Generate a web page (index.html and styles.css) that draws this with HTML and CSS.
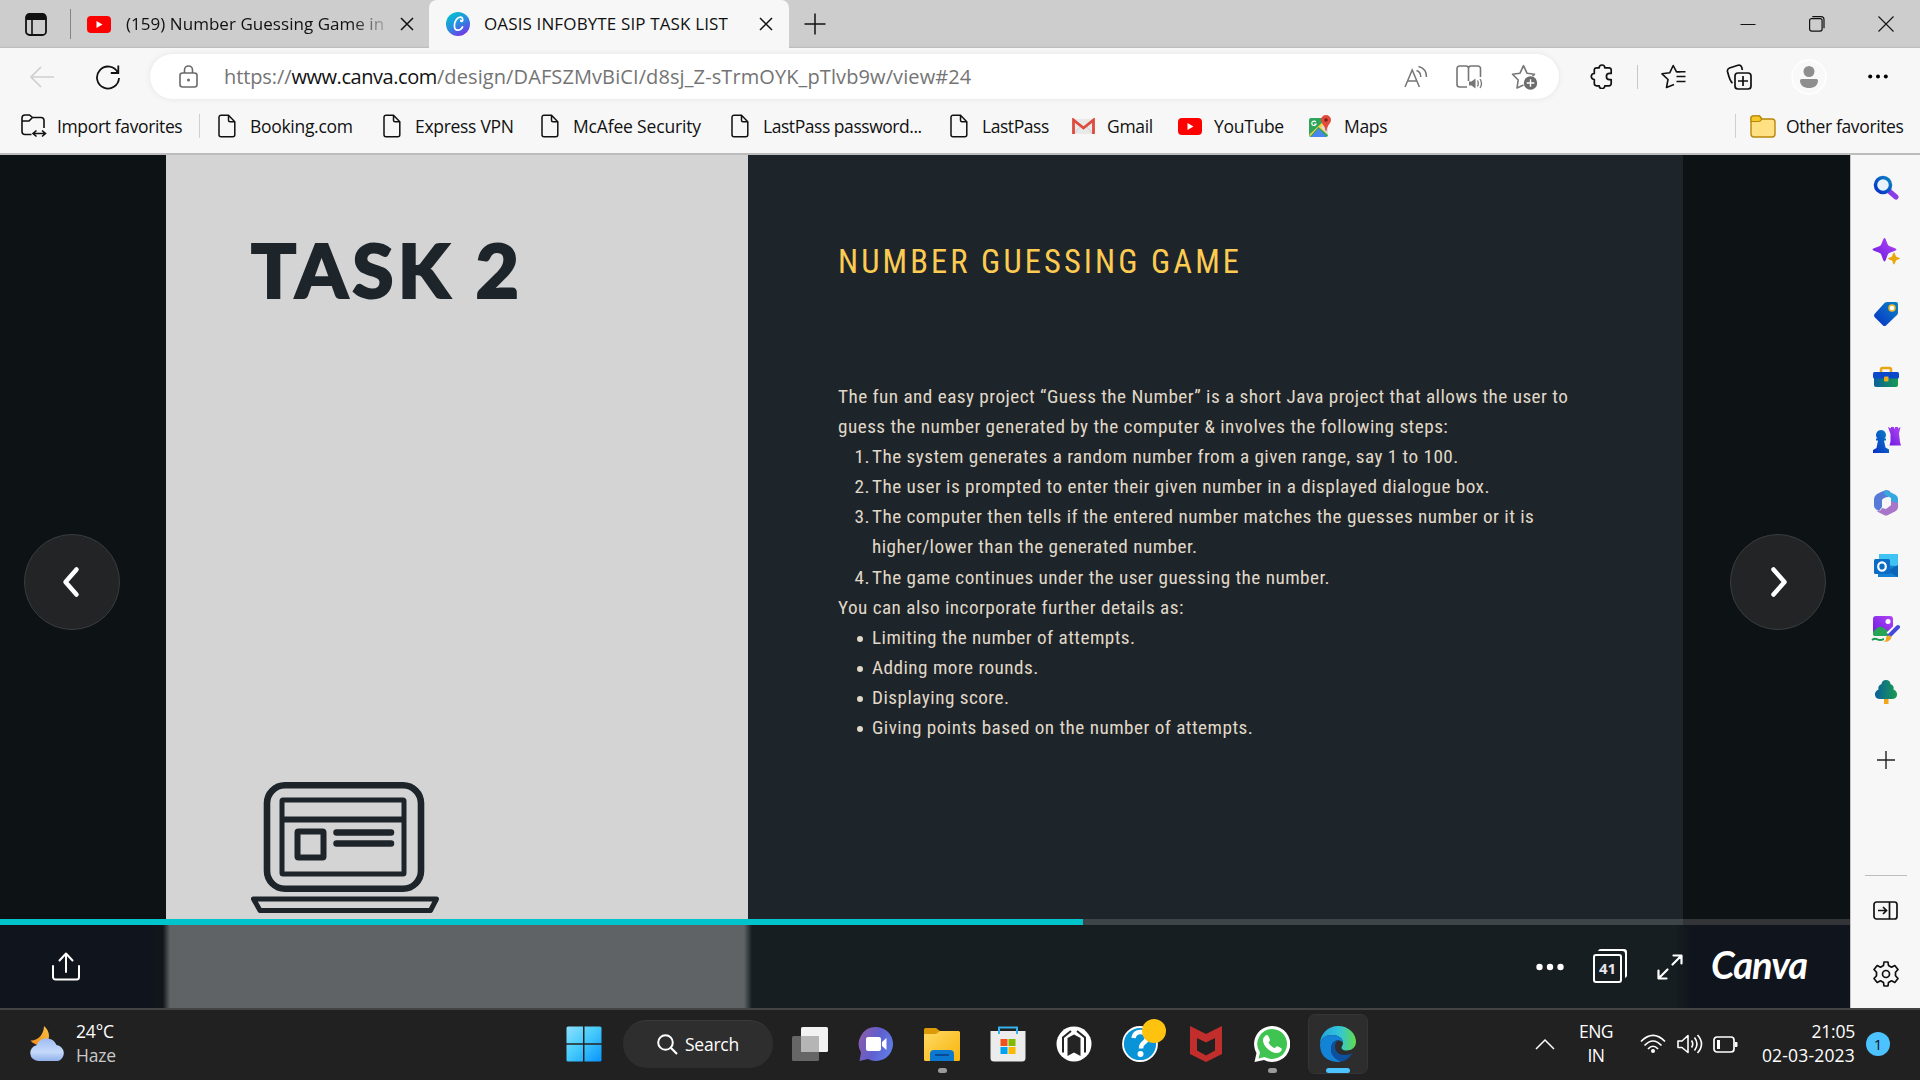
FILE: index.html
```
<!DOCTYPE html>
<html lang="en">
<head>
<meta charset="utf-8">
<title>OASIS INFOBYTE SIP TASK LIST</title>
<link rel="stylesheet" href="styles.css">
</head>
<body>
<svg class="defs" width="0" height="0" aria-hidden="true">
  <defs>
    <symbol id="page" viewBox="0 0 20 24"><path d="M4 1.2h7.500l6.300 6.500v13a2 2 0 0 1-2 2H4a2 2 0 0 1-2-2V3.200a2 2 0 0 1 2-2zM11.500 1.500v4.700a1.500 1.500 0 0 0 1.500 1.500h4.700" fill="none" stroke="#111" stroke-width="1.500"/></symbol>
    <symbol id="close" viewBox="0 0 14 14"><path d="M1 1l12 12M13 1L1 13" stroke="#111" stroke-width="1.500"/></symbol>
    <symbol id="youtube" viewBox="0 0 24 17"><rect width="24" height="17" rx="4" fill="#f00"/><path d="M9.500 5v7l6-3.500z" fill="#fff"/></symbol>
    <linearGradient id="gCanva" x1="0.200" y1="0" x2="0.800" y2="1"><stop offset="0" stop-color="#00c4cc"/><stop offset=".5" stop-color="#2a8be0"/><stop offset="1" stop-color="#7d2ae8"/></linearGradient>
    <linearGradient id="gBlue" x1="0" y1="1" x2="1" y2="0"><stop offset="0" stop-color="#0a2fc8"/><stop offset="1" stop-color="#0b84c4"/></linearGradient>
    <linearGradient id="gGreen" x1="0" y1="0" x2="1" y2="0"><stop offset="0" stop-color="#0a5f9c"/><stop offset="1" stop-color="#1a9a50"/></linearGradient>
    <linearGradient id="gPurple" x1="0" y1="1" x2="1" y2="0"><stop offset="0" stop-color="#6a1be0"/><stop offset="1" stop-color="#b245f5"/></linearGradient>
    <linearGradient id="gWin" x1="0" y1="0" x2="1" y2="1"><stop offset="0" stop-color="#8fe0ff"/><stop offset=".45" stop-color="#48ccfb"/><stop offset="1" stop-color="#0894fd"/></linearGradient>
    <linearGradient id="gFolder" x1="0" y1="0" x2="1" y2="1"><stop offset="0" stop-color="#ffd965"/><stop offset="1" stop-color="#f7b50a"/></linearGradient>
    <linearGradient id="gChat" x1="0" y1="0.300" x2="1" y2="0.700"><stop offset="0" stop-color="#8a5bab"/><stop offset=".5" stop-color="#5f5fcf"/><stop offset="1" stop-color="#5f7fe8"/></linearGradient>
    <linearGradient id="gCloud" x1="0" y1="0" x2="0" y2="1"><stop offset="0" stop-color="#9fbcf5"/><stop offset=".6" stop-color="#c5dafa"/><stop offset="1" stop-color="#8fb0ea"/></linearGradient>
    <linearGradient id="gMoon" x1="0" y1="1" x2="1" y2="0"><stop offset="0" stop-color="#f08a1c"/><stop offset="1" stop-color="#f7c443"/></linearGradient>
    <linearGradient id="gEdgeTop" x1="0" y1="0.500" x2="1" y2="0.500"><stop offset="0" stop-color="#1fa5e0"/><stop offset=".55" stop-color="#33c5d8"/><stop offset="1" stop-color="#62dc4a"/></linearGradient>
  </defs>
</svg>

<header class="browser">
  <div class="tabs">
    <svg class="tab-actions" width="22" height="23" viewBox="0 0 22 23"><rect x="1" y="1" width="20" height="21" rx="3.500" fill="none" stroke="#111" stroke-width="1.800"/><path d="M1 7V4a3 3 0 0 1 3-3h14a3 3 0 0 1 3 3v3z" fill="#111"/><path d="M7 6v16" stroke="#111" stroke-width="1.600"/></svg>
    <span class="tab-divider"></span>
    <div class="tab">
      <svg width="24" height="17"><use href="#youtube"/></svg>
      <span class="tab-title tab-title-fade">(159) Number Guessing Game in</span>
      <svg width="14" height="14"><use href="#close"/></svg>
    </div>
    <div class="tab tab-active">
      <svg width="24" height="24" viewBox="0 0 24 24"><circle cx="12" cy="12" r="12" fill="url(#gCanva)"/><path d="M16.600 8.600c.5-2-.4-3.400-2.200-3.400-3.200 0-6 4.300-6 8.300 0 2.800 1.200 4.700 3.500 4.700 2.100 0 3.800-1.500 4.700-3.300M16.400 9.200c-.6.5-1.800.4-1.600-.8" fill="none" stroke="#fff" stroke-width="1.700" stroke-linecap="round"/></svg>
      <span class="tab-title">OASIS INFOBYTE SIP TASK LIST</span>
      <svg width="14" height="14"><use href="#close"/></svg>
    </div>
    <svg class="new-tab" width="22" height="22" viewBox="0 0 22 22"><path d="M11 0.500v21M.5 11h21" stroke="#111" stroke-width="1.500"/></svg>
    <div class="window-buttons">
      <svg width="16" height="16" viewBox="0 0 16 16"><path d="M.5 8.500h15" stroke="#111"/></svg>
      <svg width="16" height="16" viewBox="0 0 16 16"><rect x=".6" y="2.600" width="12.500" height="12.500" rx="2" fill="none" stroke="#111" stroke-width="1.200"/><path d="M3.300 .6h8.700a3 3 0 0 1 3 3v8.700" fill="none" stroke="#111" stroke-width="1.200"/></svg>
      <svg width="16" height="16" viewBox="0 0 16 16"><path d="M.5 .5l15 15M15.500 .5l-15 15" stroke="#111" stroke-width="1.100"/></svg>
    </div>
  </div>

  <div class="toolbar">
    <svg class="back" width="24" height="22" viewBox="0 0 24 22"><path d="M24 11H1M11 1L1 11l10 10" fill="none" stroke="#cfcfcf" stroke-width="1.600"/></svg>
    <svg class="reload" width="26" height="26" viewBox="0 0 26 26"><path d="M22.800 8.500A11 11 0 1 0 24 14M23.300 1.500v7.500h-7.500" fill="none" stroke="#111" stroke-width="1.800"/></svg>
    <div class="address">
      <svg class="lock" width="19" height="23" viewBox="0 0 19 23"><rect x="1" y="8" width="17" height="14" rx="2.500" fill="none" stroke="#6a6a6a" stroke-width="1.600"/><path d="M5.500 8V5a4 4 0 0 1 8 0v3" fill="none" stroke="#6a6a6a" stroke-width="1.600"/><circle cx="9.500" cy="15" r="1.500" fill="#6a6a6a"/></svg>
      <div class="url"><span class="scheme">https://</span><b>www.canva.com</b><span class="path">/design/DAFSZMvBiCI/d8sj_Z-sTrmOYK_pTlvb9w/view#24</span></div>
      <div class="address-tools">
        <svg width="24" height="24" viewBox="0 0 24 24" fill="none" stroke="#767676" stroke-width="1.500"><path d="M1 22L8.200 5l7.200 17M3.500 16h9.400M12.500 5.500c3 1 4.300 3.200 4.300 6.500M14.500 1.500c5 1.300 8 5.300 8 10.500"/></svg>
        <svg width="27" height="24" viewBox="0 0 27 24" fill="none" stroke="#767676" stroke-width="1.600"><path d="M11 22H3.500A2.500 2.500 0 0 1 1 19.500V3.500A2.500 2.500 0 0 1 3.500 1H10q2.500 0 2.500 2.500Q12.500 1 15 1h7a2.500 2.500 0 0 1 2.500 2.500V12M12.500 3v13"/><path d="M13 16.500h2.500l4-3v10l-4-3H13z" fill="#767676" stroke="none"/><path d="M21.500 15.500q1.500 3 0 6M24 14q3 4.500 0 9" stroke-width="1.300"/></svg>
        <svg width="27" height="26" viewBox="0 0 27 26"><path d="M12.500 21l-6.500 3 1.200-8L1.500 10.200l7.500-1 3.500-7.500 3.500 7.500 7.500 1-2 2" fill="none" stroke="#767676" stroke-width="1.600" stroke-linejoin="round"/><circle cx="19.500" cy="19" r="6.700" fill="#6b6b6b"/><path d="M19.500 15.200v7.600M15.700 19h7.600" stroke="#fff" stroke-width="1.400"/></svg>
      </div>
    </div>
    <svg class="extensions" width="23" height="25" viewBox="0 0 23 25"><path d="M6.500 3.800h2.700a2.800 2.800 0 0 1 5.600 0H19a2.200 2.200 0 0 1 2.200 2.200v3.400h-1.700a3.100 3.100 0 0 0 0 6.200h1.700v4a2.200 2.200 0 0 1-2.200 2.200h-4.200a2.800 2.800 0 0 1-5.600 0H6.500a2.200 2.200 0 0 1-2.200-2.200v-4.100a3 3 0 0 1 0-6V6a2.200 2.200 0 0 1 2.200-2.200z" fill="none" stroke="#111" stroke-width="1.700" stroke-linejoin="round"/></svg>
    <span class="tool-divider"></span>
    <svg class="favorites" width="25" height="25" viewBox="0 0 25 25" fill="none" stroke="#111" stroke-width="1.600" stroke-linejoin="round"><path d="M13 20.500l-7.500 3L7 15.500 1 9.800l7.700-1L12.200 1.500l3.300 6.300h4"/><path d="M15.500 12.500h9M15.500 17.500h9M15.500 7.800h9"/></svg>
    <svg class="collections" width="26" height="26" viewBox="0 0 26 26" fill="none" stroke="#111" stroke-width="1.700"><rect x="9" y="9" width="16" height="16" rx="3"/><path d="M17 12v10M12 17h10"/><path d="M6.500 19C4 17.500 3.200 14 1.500 7.500Q1 5 3.500 4L12 1.300q3-.8 3.700 2l.7 2.700"/></svg>
    <svg class="profile" width="36" height="36" viewBox="0 0 36 36"><circle cx="18" cy="18" r="17" fill="#f9f9f9" stroke="#fff" stroke-width="1.500"/><circle cx="18" cy="12.500" r="5.500" fill="#8e8e8e"/><path d="M10.500 20h15a1.500 1.500 0 0 1 1.500 1.500c0 5-4 7.500-9 7.500s-9-2.500-9-7.500a1.500 1.500 0 0 1 1.500-1.500z" fill="#8e8e8e"/></svg>
    <svg class="more" width="20" height="5" viewBox="0 0 20 5"><circle cx="2.200" cy="2.500" r="2"/><circle cx="10" cy="2.500" r="2"/><circle cx="17.800" cy="2.500" r="2"/></svg>
  </div>

  <nav class="bookmarks">
    <a class="bookmark import"><svg width="26" height="24" viewBox="0 0 26 24" fill="none" stroke="#111" stroke-width="1.600"><path d="M10.500 20.500H4a3 3 0 0 1-3-3V4a3 3 0 0 1 3-3h4.500l3 2.500H20a3 3 0 0 1 3 3V14M1 7h7l3.500-3.500"/><path d="M15.500 16.500l-3.500 3 3.500 3M21 16.500l3.500 3-3.500 3M12.500 19.500H24"/></svg><span>Import favorites</span></a>
    <a class="bookmark"><svg width="20" height="24"><use href="#page"/></svg><span>Booking.com</span></a>
    <a class="bookmark"><svg width="20" height="24"><use href="#page"/></svg><span>Express VPN</span></a>
    <a class="bookmark mcafee"><svg width="20" height="24"><use href="#page"/></svg><span>McAfee Security</span></a>
    <a class="bookmark lastpass"><svg width="20" height="24"><use href="#page"/></svg><span>LastPass password...</span></a>
    <a class="bookmark lastpass"><svg width="20" height="24"><use href="#page"/></svg><span>LastPass</span></a>
    <a class="bookmark gmail"><svg width="23" height="17" viewBox="0 0 23 17"><path d="M2 1h19v15H2z" fill="#e9e9e9"/><path d="M2 16l7-8M21 16l-7-8" stroke="#cfcfcf" fill="none"/><path d="M1.500 16V2l10 8 10-8v14" fill="none" stroke="#dd4b3e" stroke-width="2.800"/></svg><span>Gmail</span></a>
    <a class="bookmark tube"><svg width="24" height="17"><use href="#youtube"/></svg><span>YouTube</span></a>
    <a class="bookmark maps"><svg width="23" height="23" viewBox="0 0 23 23"><rect x="0" y="3" width="19" height="19" rx="2" fill="#2fa45a"/><path d="M0 20L17 4l2 2v14L9.500 12 1.500 21z" fill="#f7d04a"/><path d="M2 22l7.700-8.500L17.500 22z" fill="#4a86f0"/><path d="M12 12l7 8V8z" fill="#dedede"/><path d="M17 0a5 5 0 0 1 5 5c0 3.500-4 5-4.500 11h-1C16 10 12 8.500 12 5a5 5 0 0 1 5-5z" fill="#e24a3b"/><circle cx="17" cy="5" r="1.800" fill="#7c1d16"/><path d="M6.800 7a2.200 2.200 0 1 0 .3 2H5.200" fill="none" stroke="#fff" stroke-width="1.200"/></svg><span>Maps</span></a>
    <a class="bookmark other"><svg width="26" height="23" viewBox="0 0 26 23"><path d="M3 1h6.500l2.500 3h10a3 3 0 0 1 3 3v12a3 3 0 0 1-3 3H4a3 3 0 0 1-3-3V3a2 2 0 0 1 2-2z" fill="#ffe083" stroke="#b8860b" stroke-width="1.400"/><path d="M1 6.500h7.500q2 0 3.200-2.200L9.500 1H3a2 2 0 0 0-2 2z" fill="#f7c928" stroke="#b8860b" stroke-width="1.200"/></svg><span>Other favorites</span></a>
  </nav>
</header>

<div class="content">
  <main class="viewer">
    <div class="stage">
      <div class="stage-side stage-left">
        <button class="nav-button" aria-label="Previous"><svg width="20" height="34" viewBox="0 0 20 34"><path d="M14.500 4.500L3.500 17l11 12.500" fill="none" stroke="#fff" stroke-width="4.500" stroke-linecap="round" stroke-linejoin="round"/></svg></button>
      </div>
      <section class="slide-left">
        <h1>TASK 2</h1>
        <svg class="laptop" width="190" height="132" viewBox="0 0 190 132" fill="none" stroke="#1d252a">
          <rect x="16" y="3.300" width="154" height="103.500" rx="18" stroke-width="6.600"/>
          <rect x="31" y="18" width="122" height="74" rx="1" stroke-width="5"/>
          <path d="M31 37.500h122" stroke-width="6"/>
          <rect x="46.500" y="49.500" width="26" height="26" rx="1" stroke-width="6"/>
          <path d="M85.500 50.500H140M85.500 61.500H140" stroke-width="6.500" stroke-linecap="round"/>
          <path d="M2.500 117h183l-6 11.500H9z" stroke-width="5" stroke-linejoin="round"/>
        </svg>
      </section>
      <section class="slide-right">
        <h2>NUMBER GUESSING GAME</h2>
        <div class="copy">
          <p>The fun and easy project “Guess the Number” is a short Java project that allows the user to<br>guess the number generated by the computer &amp; involves the following steps:</p>
          <ol>
            <li><i>1.</i><span>The system generates a random number from a given range, say 1 to 100.</span></li>
            <li><i>2.</i><span>The user is prompted to enter their given number in a displayed dialogue box.</span></li>
            <li><i>3.</i><span>The computer then tells if the entered number matches the guesses number or it is<br>higher/lower than the generated number.</span></li>
            <li><i>4.</i><span>The game continues under the user guessing the number.</span></li>
          </ol>
          <p>You can also incorporate further details as:</p>
          <ul>
            <li><em></em><span>Limiting the number of attempts.</span></li>
            <li><em></em><span>Adding more rounds.</span></li>
            <li><em></em><span>Displaying score.</span></li>
            <li><em></em><span>Giving points based on the number of attempts.</span></li>
          </ul>
        </div>
      </section>
      <div class="stage-side stage-right">
        <button class="nav-button" aria-label="Next"><svg width="20" height="34" viewBox="0 0 20 34"><path d="M5.500 4.500l11 12.500-11 12.500" fill="none" stroke="#fff" stroke-width="4.500" stroke-linecap="round" stroke-linejoin="round"/></svg></button>
      </div>
    </div>
    <div class="progress"><div class="progress-fill" style="width:58.540%"></div></div>
    <footer class="controls">
      <svg class="share" width="28" height="29" viewBox="0 0 28 29" fill="none" stroke="#fff" stroke-width="2" stroke-linecap="round" stroke-linejoin="round"><path d="M14 20V2M7.500 8.500L14 1.500l6.500 7M1 14v11a2.500 2.500 0 0 0 2.500 2.500h21A2.500 2.500 0 0 0 27 25V14"/></svg>
      <svg class="dots" width="28" height="8" viewBox="0 0 28 8" fill="#fff"><circle cx="3.500" cy="4" r="3.200"/><circle cx="14" cy="4" r="3.200"/><circle cx="24.500" cy="4" r="3.200"/></svg>
      <div class="pages"><span>41</span></div>
      <svg class="expand" width="26" height="26" viewBox="0 0 26 26" fill="none" stroke="#fff" stroke-width="2.200" stroke-linecap="round" stroke-linejoin="round"><path d="M15.500 10.500L24 2M16.500 1.500h8v8M10.500 15.500L2 24M1.500 16.500v8h8"/></svg>
      <span class="wordmark">Canva</span>
    </footer>
  </main>

  <aside class="sidebar">
    <div><svg width="26" height="26" viewBox="0 0 26 26"><path d="M16 16l7 6" stroke="#8a3be8" stroke-width="5" stroke-linecap="round"/><circle cx="10" cy="10" r="7.500" fill="#e6f3fb" stroke="url(#gBlue)" stroke-width="3.500"/></svg></div>
    <div><svg width="28" height="28" viewBox="0 0 28 28"><path d="M12.500 1c1.500 0 2.500 6 4 7.500s8 2.500 8 4-6.500 2.500-8 4-2.500 8-4 8-2.500-6.500-4-8-8-2.500-8-4 6.500-2.500 8-4 2.500-7.500 4-7.500z" fill="url(#gPurple)"/><path d="M22 15.500c.9 0 1.400 3.300 2.100 3.900s3.900 1.200 3.900 2.100-3.300 1.400-3.900 2.100-1.200 3.900-2.100 3.900-1.400-3.300-2.100-3.900-3.900-1.200-3.900-2.100 3.300-1.400 3.900-2.100 1.200-3.900 2.100-3.900z" fill="#e9a80c"/></svg></div>
    <div><svg width="26" height="26" viewBox="0 0 26 26"><path d="M12 1.500Q13 1 14.500 1H23a2 2 0 0 1 2 2v8.500q0 1.500-1 2.500L13 24.500q-1.500 1-3 0L1.500 16q-1-1.500 0-3z" fill="url(#gBlue)"/><circle cx="19" cy="7" r="3" fill="#fff" stroke="#f0b823" stroke-width="1.500"/></svg></div>
    <div><svg width="28" height="22" viewBox="0 0 28 22"><path d="M9 7V3.500A1.500 1.500 0 0 1 10.500 2h7A1.500 1.500 0 0 1 19 3.500V7" fill="none" stroke="#eaa612" stroke-width="2.500"/><path d="M2 10h24v9a2 2 0 0 1-2 2H4a2 2 0 0 1-2-2z" fill="url(#gGreen)"/><rect x="1" y="6" width="26" height="6.500" rx="1.500" fill="#0c48cc"/><rect x="12" y="10.500" width="4.500" height="5" rx="1" fill="#f0ae17"/></svg></div>
    <div><svg width="30" height="28" viewBox="0 0 30 28"><path d="M17 1l3 1.500V1h3v1.500h1V1h3v1.500L29.500 1l-1.500 6.500 1 8.500 1 3.500H18.500l1-4V8z" fill="url(#gPurple)"/><path d="M10 4a5 5 0 0 1 3.500 8.500H15v2h-2l1.500 7 3.500 2v3.500H2V24l3.500-2L7 14.500H5v-2h1.500A5 5 0 0 1 10 4z" fill="url(#gBlue)"/></svg></div>
    <div><svg width="26" height="28" viewBox="0 0 26 28"><path d="M8 3l5-2 4 1-2 6-6 3v7l-3 4q-5-2-5-5v-6q0-4 3-6z" fill="#557bd6"/><path d="M13 1l9 4.500q3 1.500 3 5V16l-7-3v-4l-6-3q-2-3 1-5z" fill="#38a7e0"/><path d="M25 14v4q0 3-3 4.500L15 26q-2 1-4 0L3 22q4 1 6-3l4 1 5-4v-4z" fill="#a776c8"/><path d="M9.500 10l4-2 4.500 2.500v5.500l-4.500 3-4-2.500z" fill="#f7f7f7"/></svg></div>
    <div><svg width="26" height="26" viewBox="0 0 26 26"><rect x="6" y="1" width="19" height="12" fill="#3fc3f2"/><path d="M5 12l20 1v11H5z" fill="#1680d2"/><path d="M14 18l11-6v12z" fill="#0b66b8"/><rect x="1" y="6" width="16" height="15" rx="1.500" fill="#0a6cc4"/><ellipse cx="9" cy="13.500" rx="3.800" ry="4.200" fill="none" stroke="#fff" stroke-width="2.200"/></svg></div>
    <div><svg width="29" height="28" viewBox="0 0 29 28"><rect x="2" y="1" width="20" height="20" rx="3" fill="url(#gPurple)"/><path d="M2 17q5-6 8.500-5t8 6l-2 3H5q-3 0-3-2z" fill="#28a457"/><circle cx="17" cy="6.500" r="2.500" fill="#fff"/><path d="M1 25c4-3 5 0 8 0s3-1 4-1" fill="none" stroke="#1c9a50" stroke-width="2"/><path d="M18 20L27 11.500" stroke="#fff" stroke-width="7"/><path d="M18.500 20.500L27 12" stroke="#4548df" stroke-width="4" stroke-linecap="round"/><path d="M12 27q3-1 3-4t4-2.500q2.500 1.500.5 4T12 27z" fill="#f2a823"/></svg></div>
    <div><svg width="24" height="26" viewBox="0 0 24 26"><path d="M10 18h4.500v7H10z" fill="#f0a51d"/><path d="M12 1q4 0 4.500 4 4 1.500 3 5.500 4 2 3.500 5.500-.5 4-5 4H6q-4.500 0-5-4-.5-3.500 3.500-5.500-1-4 3-5.500Q8 1 12 1z" fill="url(#gGreen)"/></svg></div>
    <div class="side-add"><svg width="18" height="18" viewBox="0 0 18 18"><path d="M9 0v18M0 9h18" stroke="#222" stroke-width="1.400"/></svg></div>
    <hr>
    <div class="side-panel"><svg width="25" height="19" viewBox="0 0 25 19" fill="none" stroke="#111" stroke-width="1.700"><rect x="1" y="1" width="23" height="17" rx="2.500"/><path d="M16.500 1v17M5 9.500h8M10 6l3.500 3.500L10 13"/></svg></div>
    <div class="side-settings"><svg width="26" height="26" viewBox="0 0 26 26" fill="none" stroke="#111" stroke-width="1.700" stroke-linejoin="round"><path d="M10.500 4.500L11 1h4l.5 3.500 3 1.700L21.800 4.500l3.200 4-2.500 2.800v3.400l2.500 2.800-3.200 4-3.300-1.700-3 1.700L15 25h-4l-.5-3.500-3-1.700-3.300 1.700-3.200-4 2.500-2.800v-3.400L1 8.500l3.200-4 3.300 1.700z"/><circle cx="13" cy="13" r="3.500"/></svg></div>
  </aside>
</div>

<div class="taskbar">
  <div class="weather">
    <svg width="37" height="37" viewBox="0 0 37 37"><path d="M15 1c6 5 7 14 1 17.500-5 3-11 1.500-14.500-3C9 16 15 9 15 1z" fill="url(#gMoon)"/><path d="M9 36a8 8 0 0 1-1.500-15.800C9.500 16 13 13.500 17.500 13.500c5 0 8.500 2.700 10 6.500A8.200 8.200 0 0 1 29 36z" fill="url(#gCloud)"/></svg>
    <div><div class="temp">24°C</div><div class="haze">Haze</div></div>
  </div>
  <div class="apps">
    <div class="app"><svg width="36" height="36" viewBox="0 0 36 36" fill="url(#gWin)"><path d="M2 .5h15v16.800H.5V2A1.500 1.500 0 0 1 2 .5zM18.500.5H34A1.500 1.500 0 0 1 35.500 2v15.300h-17zM.5 18.800H17v16.700H2A1.500 1.500 0 0 1 .5 34zM18.500 18.800h17V34a1.500 1.500 0 0 1-1.500 1.500H18.500z"/></svg></div>
    <div class="search"><svg width="21" height="21" viewBox="0 0 21 21"><circle cx="8.500" cy="8.500" r="7.300" fill="none" stroke="#fff" stroke-width="2"/><path d="M13.800 13.800L20 20" stroke="#fff" stroke-width="2.200"/></svg><span>Search</span></div>
    <div class="app"><svg width="36" height="36" viewBox="0 0 36 36"><rect x="9" y="1" width="27" height="25" rx="1.500" fill="#f2f2f2"/><rect x="0" y="10" width="27" height="25" rx="1.500" fill="#666"/><path d="M9 10h18v16H9z" fill="#b5b5b5"/></svg></div>
    <div class="app"><svg width="36" height="36" viewBox="0 0 36 36"><path d="M18 1a17 17 0 1 1-8 32L1.500 35 3 26.500A17 17 0 0 1 18 1z" fill="url(#gChat)"/><rect x="8" y="11" width="15" height="14" rx="2" fill="#fff"/><path d="M24 16l4.500-4v12L24 20z" fill="#fff"/></svg></div>
    <div class="app app-open"><svg width="36" height="36" viewBox="0 0 36 36"><path d="M0 3.500A1.500 1.500 0 0 1 1.500 2H12l4 3v6H0z" fill="#dc9a06"/><path d="M0 8h12l4-3h18.500A1.500 1.500 0 0 1 36 6.500v27a1.500 1.500 0 0 1-1.500 1.500h-33A1.500 1.500 0 0 1 0 33.500z" fill="url(#gFolder)"/><path d="M6 35v-7a4 4 0 0 1 4-4h16a4 4 0 0 1 4 4v7z" fill="#0c78cf"/><path d="M11 29h14" stroke="#064a94" stroke-width="2"/></svg></div>
    <div class="app"><svg width="36" height="36" viewBox="0 0 36 36"><path d="M.5 5h35v27a3.500 3.500 0 0 1-3.500 3.500H4A3.500 3.500 0 0 1 .5 32z" fill="#ececec"/><path d="M9 8V1.500h18V8" fill="none" stroke="#35b2ea" stroke-width="2"/><path d="M10.500 13h7v7h-7z" fill="#f1511b"/><path d="M18.500 13h7v7h-7z" fill="#80bb01"/><path d="M10.500 21h7v7h-7z" fill="#00a3ee"/><path d="M18.500 21h7v7h-7z" fill="#fbb902"/></svg></div>
    <div class="app"><svg width="36" height="36" viewBox="0 0 36 36"><circle cx="18" cy="18" r="17.500" fill="#fff"/><path d="M11.500 30V12l6.500-3.500L24.500 12v18L18 26.500z" fill="#242424"/><path d="M7 26.500V11.500l8-6.500M29 26.500V11.500L21 5" fill="none" stroke="#242424" stroke-width="2"/></svg></div>
    <div class="app help"><svg width="36" height="36" viewBox="0 0 36 36"><circle cx="18" cy="18" r="17" fill="#0a94d8" stroke="#fff" stroke-width="1.800"/><path d="M11.500 12q1-6 7-6 6.500 0 6.500 5.500 0 3-3.500 5.500-2.500 2-2.500 5.500" fill="none" stroke="#fff" stroke-width="4.500"/><circle cx="18.500" cy="28" r="3" fill="#fff"/></svg><span class="badge"></span></div>
    <div class="app"><svg width="32" height="36" viewBox="0 0 32 36"><path d="M0 0l16 8L32 0v28l-16 8-16-8zM7 12v12.500l9 5 9-5V12l-9 4.500z" fill="#c22e2c" fill-rule="evenodd"/></svg></div>
    <div class="app app-open"><svg width="36" height="36" viewBox="0 0 36 36"><path d="M18 0a18 18 0 1 1-8 34L.5 36 2.500 27A18 18 0 0 1 18 0z" fill="#fff"/><path d="M18 3a15 15 0 1 1-7.500 28l-6 1.500L6 26.500A15 15 0 0 1 18 3z" fill="#3fc351"/><path d="M11.500 9.500q2-1.200 3 .8l1.500 3.500q.2 1-1.500 2.700 2 4 6.200 5.700 1.800-2.400 2.800-2l3.800 2q1 1-.3 3-3 3-7.500 1.300Q11 23 9 15.500q-.3-4 2.500-6z" fill="#fff"/></svg></div>
    <div class="app app-active"><svg width="36" height="36" viewBox="0 0 36 36"><path d="M0 18C0 8 8 0 18 0c11 0 18 8 18 15.500 0 6-4.500 9-9.500 9-4 0-5-2-5-3s1.500-2 1.500-4.500C23 12 18 9 12 9 6 9 1 12 0 18z" fill="url(#gEdgeTop)"/><path d="M0 18C1 12 6 9 12 9c6 0 11 3 11 8-1-2-3-2.800-5-2.800-4 0-7 4-7 8.800 0 7 6 11 10 12.700Q19.500 36 18 36 0 35 0 18z" fill="#1283d6"/><path d="M11 23c0-4.800 3-8.800 7-8.800-2 1.500-3 4-3 6.300 0 5 4 8.500 9.500 8.500 3.500 0 6-1 8-2.300Q29 34 21 35.700C16 33.500 11 30 11 23z" fill="#0d50a0"/></svg></div>
  </div>
  <div class="tray">
    <svg class="chevron" width="20" height="12" viewBox="0 0 20 12"><path d="M1 11l9-9 9 9" fill="none" stroke="#fff" stroke-width="1.500"/></svg>
    <div class="lang">ENG<br>IN</div>
    <svg class="wifi" width="26" height="20" viewBox="0 0 26 20" fill="none" stroke="#fff" stroke-width="1.700"><path d="M1 7.500q12-12 24 0M4.500 11.500q8.500-9 17 0M8 15q5-5.500 10 0"/><circle cx="13" cy="17" r="2" fill="#fff" stroke="none"/></svg>
    <svg class="volume" width="26" height="20" viewBox="0 0 26 20" fill="none" stroke="#fff" stroke-width="1.600" stroke-linejoin="round"><path d="M1 7v6.500h4l6 5V1.500L5 7zM14.500 6.500q2.500 3.500 0 7M17.500 3.500q5 6.500 0 13M20.500 1q8 9 0 18"/></svg>
    <svg class="battery" width="25" height="17" viewBox="0 0 25 17"><rect x="1" y="1" width="20" height="15" rx="3" fill="none" stroke="#fff" stroke-width="1.700"/><path d="M4 4h3v9H4zM22 6h1.500q1 0 1 1v3q0 1-1 1H22z" fill="#fff"/></svg>
    <div class="clock">21:05<br><span>02-03-2023</span></div>
    <span class="notify">1</span>
  </div>
</div>
</body>
</html>
```
FILE: styles.css
```
* { box-sizing: border-box; }
body {
  margin: 0;
  width: 1920px;
  height: 1080px;
  overflow: hidden;
  font-family: "Open Sans", "Noto Sans", sans-serif;
  color: #111;
  background: #f7f7f7;
}
svg { display: block; flex: none; }
.defs { position: absolute; }

.browser { height: 155px; border-bottom: 2px solid #bcbcbc; }

/* Tab strip */
.tabs {
  display: flex;
  align-items: center;
  height: 48px;
  padding-left: 25px;
  background: linear-gradient(#cdcdcd 46px, #b9b9b9 48px);
}
.tab-divider { width: 1px; height: 30px; margin: 0 16px 0 23px; background: #858585; }
.tab { display: flex; align-items: center; height: 48px; width: 342px; font-size: 17px; }
.tab-title { width: 274px; padding: 0 0 2px 15px; white-space: nowrap; letter-spacing: 0.040px; }
.tab-title-fade {
  width: 289px;
  -webkit-mask-image: linear-gradient(90deg, #000 240px, transparent 282px);
  mask-image: linear-gradient(90deg, #000 240px, transparent 282px);
}
.tab-active { width: 360px; padding-left: 17px; background: #f7f7f7; border-radius: 8px 8px 0 0; }
.tab-active .tab-title { width: 289px; padding-left: 14px; letter-spacing: 0.130px; }
.new-tab { margin-left: 15px; }
.window-buttons { display: flex; gap: 53px; margin-left: auto; padding-right: 26px; }

/* Address row */
.toolbar { display: flex; align-items: center; height: 57px; padding-left: 30px; }
.reload { margin-left: 41px; }
.address {
  display: flex;
  align-items: center;
  width: 1409px;
  height: 45px;
  margin-left: 29px;
  padding: 0 21px 0 29px;
  border-radius: 23px;
  background: #fff;
  box-shadow: 0 0 6px rgba(0, 0, 0, 0.080);
}
.url { display: flex; margin-left: 26px; font-size: 20px; color: #747474; white-space: nowrap; }
.url b { font-weight: 400; color: #111; letter-spacing: -0.440px; }
.scheme { letter-spacing: -0.100px; }
.path { letter-spacing: 0.100px; }
.address-tools { display: flex; align-items: center; gap: 28px; margin-left: auto; }
.extensions { margin-left: 31px; }
.tool-divider { width: 1px; height: 24px; margin: 0 23px 0 24px; background: #c8c8c8; }
.collections { margin-left: 40px; }
.profile { margin-left: 39px; }
.more { margin-left: 41px; }

/* Bookmarks */
.bookmarks {
  display: grid;
  grid-template-columns: 196px 165px 158px 190px 219px 123px 106px 131px 426px 1fr;
  align-items: center;
  height: 42px;
  padding-left: 21px;
  font-size: 17.500px;
  letter-spacing: -0.300px;
  white-space: nowrap;
}
.bookmark { display: flex; align-items: center; height: 24px; gap: 13px; }
.bookmark span { padding-bottom: 1px; }
.bookmark.import { width: 179px; gap: 10px; border-right: 1px solid #cfcfcf; letter-spacing: -0.360px; }
.mcafee { letter-spacing: -0.170px; }
.lastpass { gap: 13px; letter-spacing: -0.450px; }
.gmail, .tube { gap: 12px; }
.maps { gap: 12px; }
.bookmark.other { padding-left: 14px; gap: 10px; border-left: 1px solid #cfcfcf; letter-spacing: -0.360px; }

/* Page */
.content { display: flex; height: 853px; }
.viewer { width: 1850px; }
.stage { display: flex; height: 764px; }
.stage-side { background: #0d1215; padding-top: 379px; }
.stage-left { width: 166px; padding-left: 24px; }
.stage-right { width: 167px; padding-left: 47px; }
.nav-button {
  display: grid;
  place-items: center;
  width: 96px;
  height: 96px;
  padding: 0;
  border: 1px solid #3a3d3f;
  border-radius: 50%;
  background: #222425;
}
.slide-left { width: 582px; padding: 76px 0 0 85px; background: #d4d4d4; }
.slide-left h1 {
  margin: 0;
  font: 900 75px/76px Lato, sans-serif;
  letter-spacing: 4.300px;
  word-spacing: -1px;
  color: #1d252a;
  -webkit-text-stroke: 2px #1d252a;
}
.laptop { margin-top: 475px; }
.slide-right { width: 935px; padding: 87px 0 0 90px; background: #1d252a; }
.slide-right h2 {
  margin: 0 0 100px;
  font: 400 32.500px/40px Roboto, sans-serif;
  font-stretch: 75%;
  letter-spacing: 3.080px;
  color: #fdcb52;
}
.copy {
  font: 400 19.200px/30.100px Roboto, sans-serif;
  font-stretch: 75%;
  letter-spacing: 0.465px;
  color: #e0d8c8;
  white-space: nowrap;
}
.copy p, .copy ol, .copy ul { margin: 0; padding: 0; list-style: none; }
.copy li { display: flex; }
.copy i { width: 32px; margin-right: 2px; text-align: right; font-style: normal; }
.copy em { width: 6px; height: 6px; margin: 13px 9px 0 19px; border-radius: 50%; background: #e0d8c8; }

.progress {
  height: 6px;
  background: linear-gradient(90deg, #3d4548 1683px, #333438 1683px);
}
.progress-fill { height: 6px; background: #00c4cc; }
.controls {
  display: flex;
  align-items: center;
  height: 83px;
  padding-left: 52px;
  background: linear-gradient(90deg, #10141d 150px, #12171b 163px, #5f6366 170px, #5f6366 744px, #161e21 752px, #161e21 1675px, #10141d 1692px);
}
.dots { margin-left: 1456px; }
.pages {
  display: grid;
  place-items: center;
  width: 29px;
  height: 29px;
  margin: 4px 0 0 29px;
  border: 2px solid #fff;
  border-radius: 3px;
  box-shadow: 3px -3px 0 0 #161e21, 5px -5px 0 0 #fff;
  color: #e8e4ee;
  font: 700 15px/1 "Open Sans", sans-serif;
}
.expand { margin-left: 35px; }
.wordmark {
  margin: -5px 0 0 28px;
  color: #fff;
  font: italic 700 38px/40px Lato, sans-serif;
  letter-spacing: -0.950px;
}

.sidebar {
  width: 70px;
  padding-top: 1px;
  border-left: 1px solid #c4c4c4;
  background: #f7f7f7;
}
.sidebar div { display: grid; place-items: center; height: 63px; }
.sidebar .side-add { height: 74px; }
.sidebar hr { width: 42px; height: 1px; margin: 78px 0 0 14px; border: 0; background: #bdbdbd; }
.sidebar .side-panel { height: 69px; }
.sidebar .side-settings { height: 57px; }

/* Taskbar */
.taskbar {
  display: flex;
  height: 72px;
  border-top: 2px solid #434343;
  background: #212121;
  color: #fff;
  font-size: 17.500px;
  line-height: 24.500px;
}
.weather { display: flex; align-items: center; width: 551px; padding-left: 29px; gap: 10px; }
.weather svg { margin-top: -4px; }
.temp { letter-spacing: -0.180px; }
.haze { color: #c9c9c9; letter-spacing: -0.200px; }
.weather > div { margin-top: -4px; }
.lang, .clock { margin-top: -2px; }
.apps { display: flex; align-items: center; height: 68px; }
.app { display: grid; place-items: center; position: relative; width: 66px; height: 60px; }
.app-open::after {
  content: "";
  position: absolute;
  left: 28.500px;
  bottom: 1px;
  width: 9px;
  height: 5px;
  border-radius: 3px;
  background: #9a9a9a;
}
.app-active { width: 60px; margin-left: 3px; border: 1px solid #353535; border-radius: 7px; background: #2d2d2d; }
.app-active::after {
  content: "";
  position: absolute;
  left: 17px;
  bottom: 0;
  width: 24px;
  height: 5px;
  border-radius: 3px;
  background: #4cc2ff;
}
.badge { position: absolute; top: 5px; right: 7px; width: 24px; height: 24px; border-radius: 50%; background: #ffc20e; }
.search {
  display: flex;
  align-items: center;
  gap: 7px;
  width: 150px;
  height: 48px;
  margin: 0 4px 0 6px;
  padding-left: 34px;
  border-radius: 24px;
  border-top: 1px solid #3a3a3a;
  background: #2e2e2e;
  font-size: 17.500px;
  letter-spacing: -0.250px;
}
.tray { display: flex; align-items: center; height: 68px; margin-left: auto; padding-right: 30px; }
.lang { width: 36px; margin-left: 23px; text-align: center; letter-spacing: -0.600px; }
.wifi { margin-left: 26px; }
.volume { margin-left: 11px; }
.battery { margin-left: 10px; }
.clock { width: 96px; margin-left: 21px; text-align: right; letter-spacing: -0.200px; }
.clock span { letter-spacing: 0.180px; }
.notify {
  display: grid;
  place-items: center;
  width: 24px;
  height: 24px;
  margin-left: 11px;
  border-radius: 50%;
  background: #4cc2ff;
  color: #111;
  font-size: 15px;
}
```
